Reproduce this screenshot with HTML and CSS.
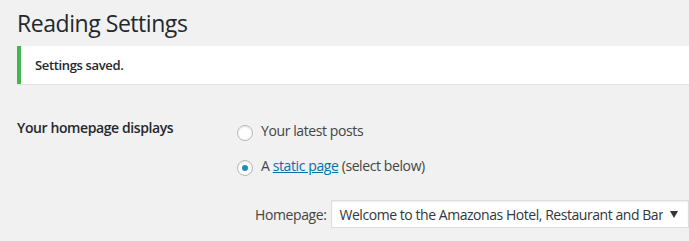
FILE: index.html
```html
<!DOCTYPE html>
<html lang="en">
<head>
<meta charset="utf-8">
<title>Reading Settings</title>
<link rel="stylesheet" href="styles.css">
</head>
<body>
<div class="wrap">
  <h1 class="title">Reading Settings</h1>
  <div class="notice"><p>Settings saved.</p></div>
  <div class="form-row">
    <div class="row-label">Your homepage displays</div>
    <div class="row-field">
      <label class="choice"><span class="radio"></span><span>Your latest posts</span></label>
      <label class="choice second"><span class="radio checked"></span><span>A <a href="#" class="link">static page</a> (select below)</span></label>
      <div class="select-row">
        <span class="select-label">Homepage:</span>
        <div class="select"><span class="select-text">Welcome to the Amazonas Hotel, Restaurant and Bar</span><span class="arrow"></span></div>
      </div>
    </div>
  </div>
</div>
</body>
</html>
```
FILE: styles.css
```css
html, body {
  margin: 0;
  padding: 0;
  background: #f1f1f1;
}
body {
  font-family: "Open Sans", "Noto Sans", sans-serif;
  color: #23282d;
  overflow: hidden;
  width: 689px;
  height: 241px;
  white-space: nowrap;
}
.wrap {
  padding-left: 17px;
}
.title {
  margin: 0;
  padding-top: 9px;
  font-size: 23px;
  line-height: 29px;
  font-weight: 400;
  letter-spacing: -0.45px;
  color: #23282d;
  height: 37px;
}
.notice {
  background: #fff;
  border-left: 4px solid #46b450;
  box-shadow: 0 1px 1px rgba(0,0,0,0.06);
  height: 38px;
  display: flex;
  align-items: center;
}
.notice p {
  margin: 0;
  padding-left: 14px;
  font-size: 13px;
  line-height: 18px;
  font-weight: 600;
  letter-spacing: -0.35px;
  color: #23282d;
}
.form-row {
  display: grid;
  grid-template-columns: 220px 1fr;
  margin-top: 34px;
}
.row-label {
  font-size: 14px;
  line-height: 20px;
  font-weight: 600;
  letter-spacing: -0.4px;
  color: #23282d;
}
.row-field {
  padding-top: 3px;
  display: flex;
  flex-direction: column;
}
.choice {
  display: flex;
  align-items: center;
  font-size: 14px;
  line-height: 20px;
  letter-spacing: -0.4px;
  color: #444;
  height: 20px;
}
.choice.second {
  margin-top: 15px;
}
.radio {
  width: 14px;
  height: 14px;
  border: 1px solid #b4b9be;
  border-radius: 50%;
  background: #fff;
  box-shadow: inset 0 1px 2px rgba(0,0,0,0.1);
  margin: 3px 8px 0 0;
  display: flex;
  align-items: center;
  justify-content: center;
}
.radio.checked::after {
  content: "";
  width: 6px;
  height: 6px;
  border-radius: 50%;
  background: #1e8cbe;
}
.link {
  color: #0073aa;
  text-decoration: underline;
}
.select-row {
  display: flex;
  align-items: center;
  margin-top: 24px;
  margin-left: 18px;
}
.select-label {
  font-size: 14px;
  letter-spacing: -0.4px;
  color: #444;
  margin-right: 5px;
}
.select {
  width: 349px;
  height: 26px;
  border: 1px solid #ddd;
  background: #fff;
  box-shadow: inset 0 1px 2px rgba(0,0,0,0.07);
  display: flex;
  align-items: center;
  justify-content: space-between;
  padding-left: 7px;
  box-sizing: content-box;
  font-size: 14px;
  letter-spacing: -0.45px;
  color: #32373c;
}
.select-text {
  overflow: hidden;
}
.arrow {
  flex: none;
  width: 0;
  height: 0;
  border-left: 4px solid transparent;
  border-right: 4px solid transparent;
  border-top: 7px solid #32373c;
  margin-right: 10px;
}
```
